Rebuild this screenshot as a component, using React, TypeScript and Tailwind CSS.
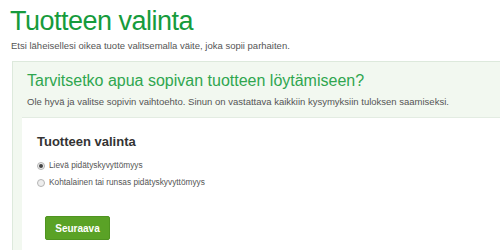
import React from "react";

export default function App() {
  return (
    <div className="w-[500px] h-[250px] overflow-hidden bg-white" style={{ fontFamily: '"Liberation Sans", Arial, sans-serif' }}>
      <div className="pl-[10px] pt-[3px]">
        <h1 className="text-[27px] leading-[36px] text-[#169b3c] font-normal tracking-[-0.5px]">Tuotteen valinta</h1>
        <p className="text-[9.5px] leading-[14px] text-[#555] ml-[1px]">Etsi läheisellesi oikea tuote valitsemalla väite, joka sopii parhaiten.</p>
      </div>
      <div className="ml-[12px] mt-[8px] w-[520px] border border-[#dde9dc] bg-[#f2f8f0] pl-[9px] h-[300px]">
        <div className="pl-[5px] pt-[8px] pb-[8px]">
          <h2 className="text-[16px] leading-[22px] text-[#2fa64f]">Tarvitsetko apua sopivan tuotteen löytämiseen?</h2>
          <p className="text-[9.5px] leading-[14px] text-[#555] mt-[3px]">Ole hyvä ja valitse sopivin vaihtoehto. Sinun on vastattava kaikkiin kysymyksiin tuloksen saamiseksi.</p>
        </div>
        <div className="bg-white border-t border-[#e3ece2] h-[200px] pl-[15px] pt-[16px]">
          <h3 className="text-[13px] leading-[16px] font-bold text-[#333]">Tuotteen valinta</h3>
          <div className="mt-[10px] flex flex-col gap-[6px]">
            <label className="flex items-center gap-[4px] text-[8.3px] leading-[11px] text-[#555]">
              <span className="w-[8px] h-[8px] rounded-full border border-[#b5b5b5] bg-[#eee] flex items-center justify-center">
                <span className="w-[4px] h-[4px] rounded-full bg-[#444]" />
              </span>
              Lievä pidätyskyvyttömyys
            </label>
            <label className="flex items-center gap-[4px] text-[8.3px] leading-[11px] text-[#555]">
              <span className="w-[8px] h-[8px] rounded-full border border-[#b5b5b5] bg-[#eee]" />
              Kohtalainen tai runsas pidätyskyvyttömyys
            </label>
          </div>
          <button className="mt-[28px] ml-[8px] w-[65px] h-[24px] rounded-[2px] bg-[#5aa226] border border-[#4f9420] text-white text-[10px] font-bold">Seuraava</button>
        </div>
      </div>
    </div>
  );
}
